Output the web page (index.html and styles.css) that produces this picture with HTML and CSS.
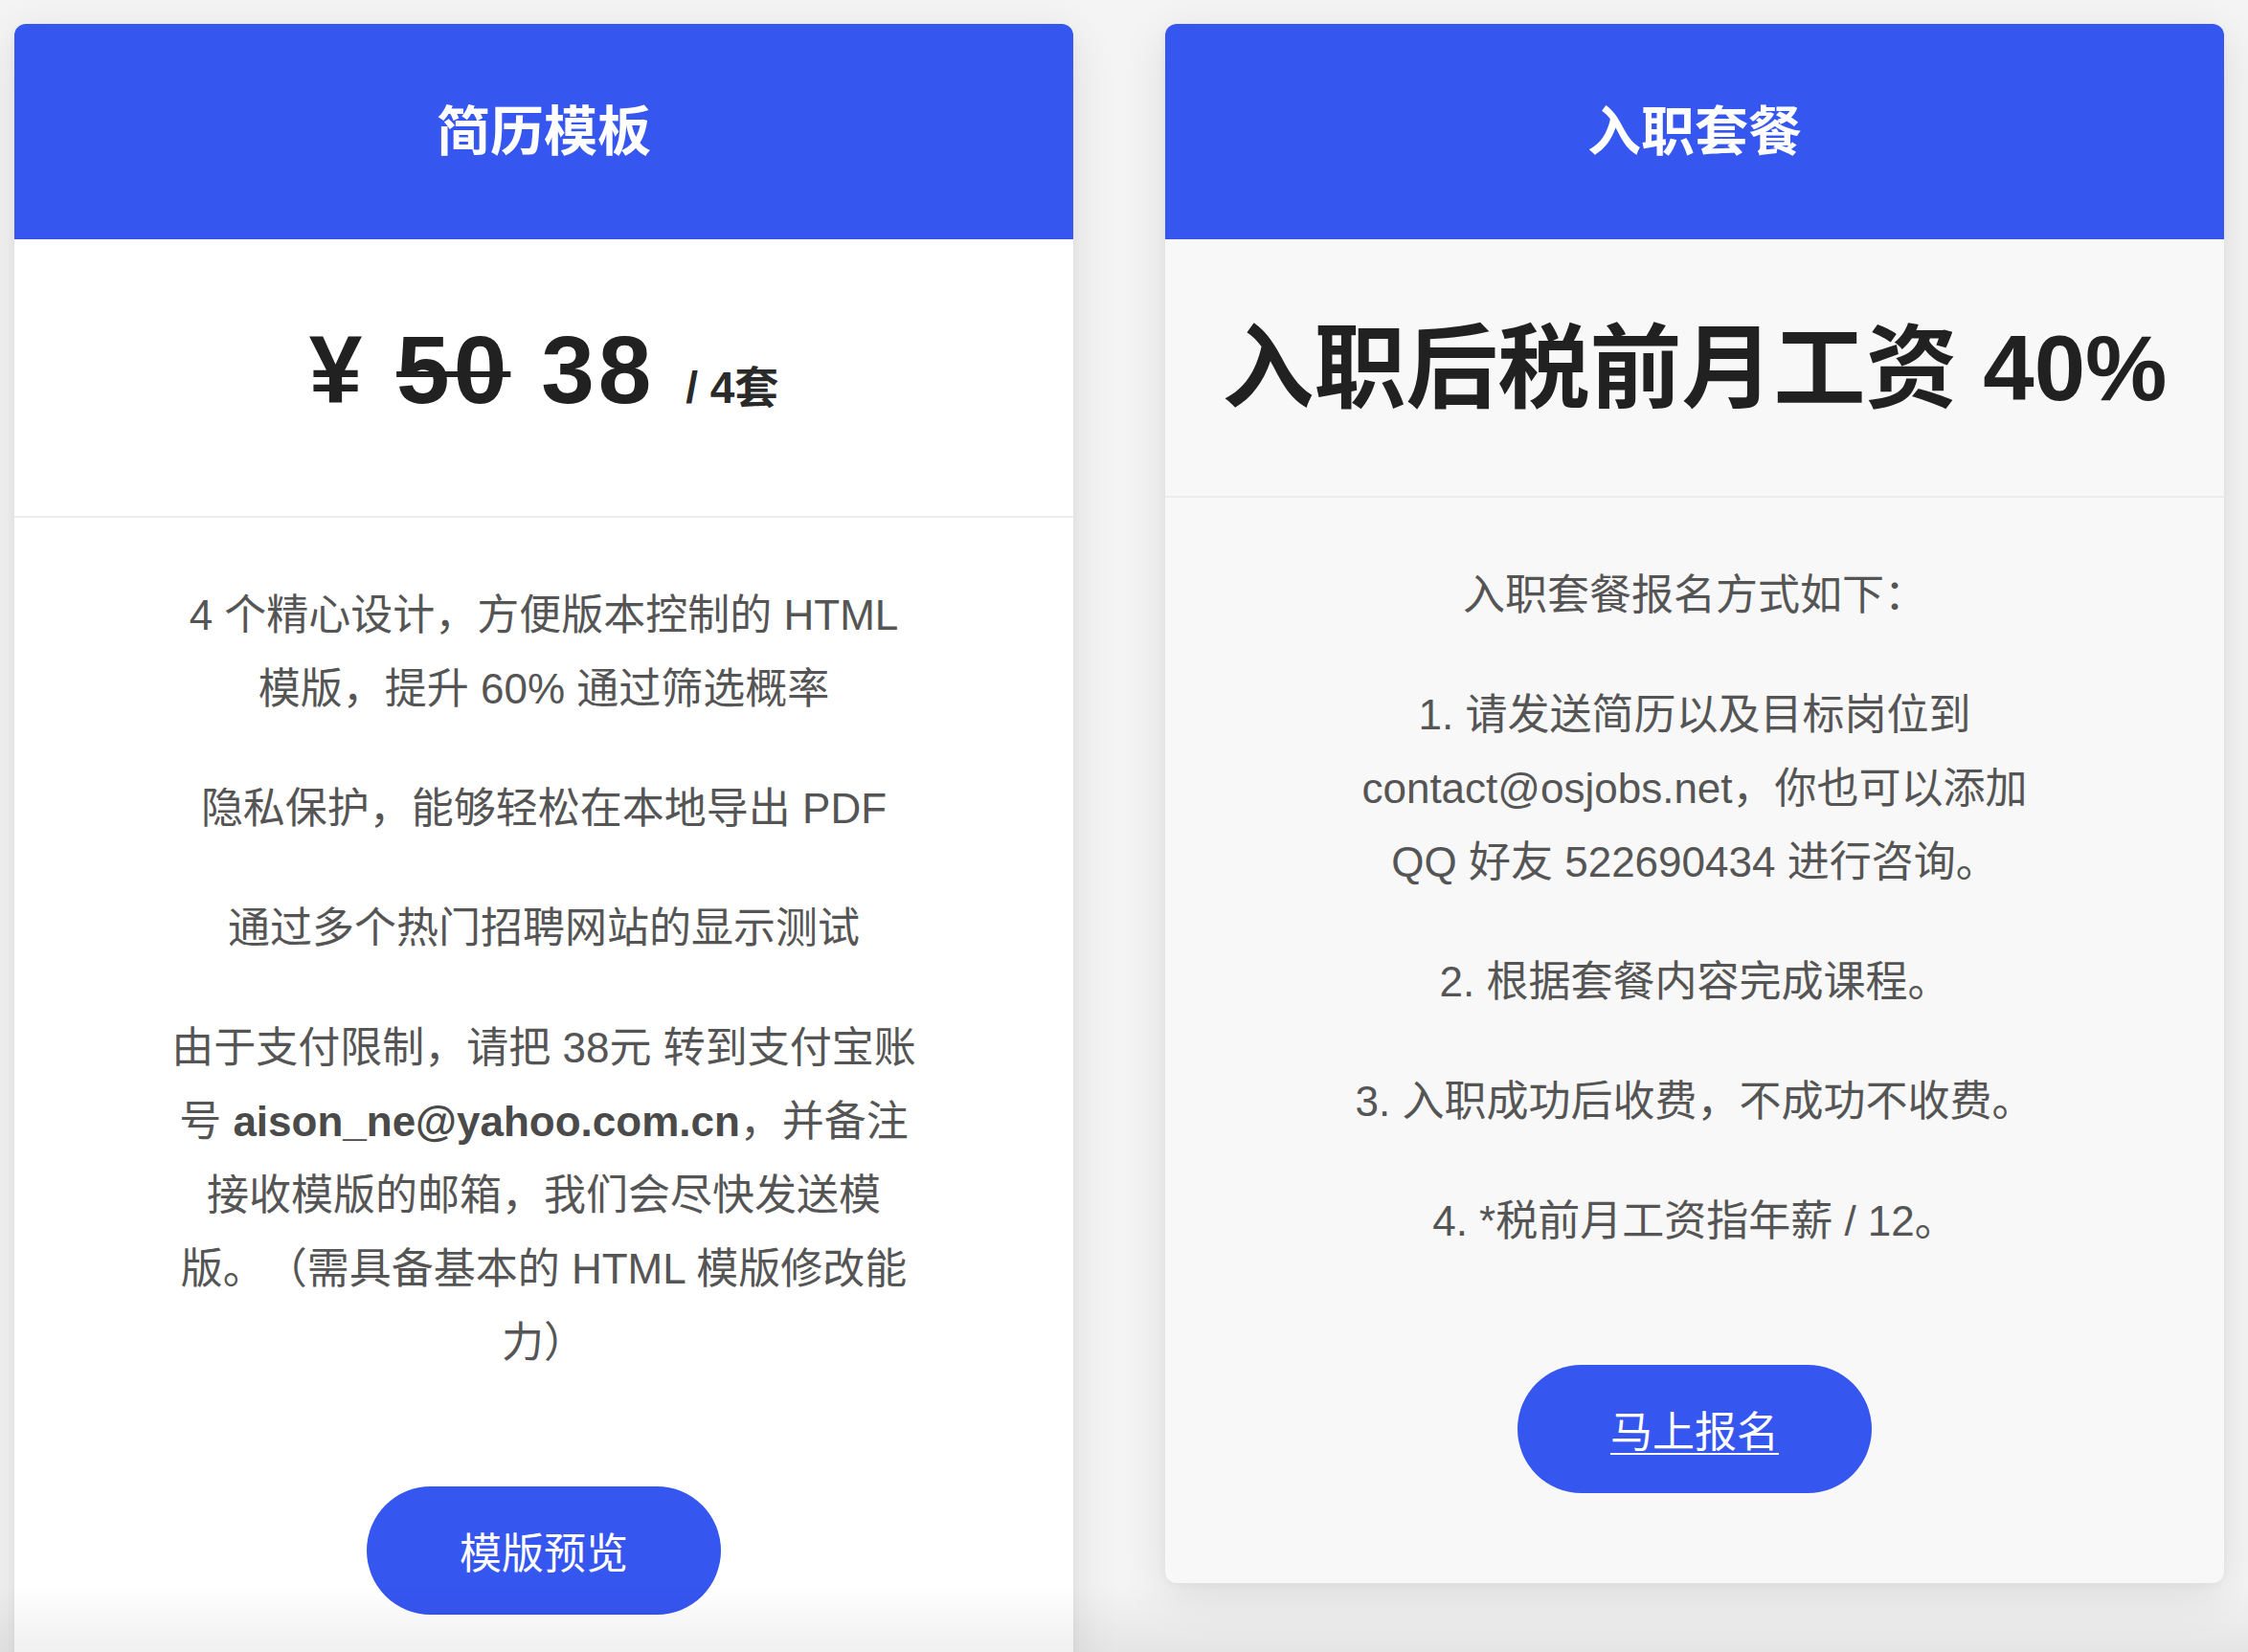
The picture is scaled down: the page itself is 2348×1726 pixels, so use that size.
FILE: index.html
```html
<!DOCTYPE html>
<html lang="zh-CN">
<head>
<meta charset="utf-8">
<title>简历模板 / 入职套餐</title>
<link rel="stylesheet" href="styles.css">
</head>
<body>
<main class="plans">
  <section class="card card--white">
    <header class="card-header"><h2 class="card-title">简历模板</h2></header>
    <div class="price price--tall">
      <h1 class="price-title price-title--spaced">¥ <s>50</s> 38 <small>/ 4套</small></h1>
    </div>
    <div class="card-body">
      <div class="copy copy--wide">
        <p>4 个精心设计，方便版本控制的 HTML 模版，提升 60% 通过筛选概率</p>
        <p>隐私保护，能够轻松在本地导出 PDF</p>
        <p>通过多个热门招聘网站的显示测试</p>
        <p>由于支付限制，请把 38元 转到支付宝账号 <b>aison_ne@yahoo.com.cn</b>，并备注接收模版的邮箱，我们会尽快发送模版。（需具备基本的 HTML 模版修改能力）</p>
      </div>
      <a class="btn">模版预览</a>
    </div>
  </section>
  <section class="card card--gray">
    <header class="card-header"><h2 class="card-title">入职套餐</h2></header>
    <div class="price">
      <h1 class="price-title">入职后税前月工资 40%</h1>
    </div>
    <div class="card-body">
      <div class="copy copy--narrow">
        <p>入职套餐报名方式如下：</p>
        <p>1. 请发送简历以及目标岗位到 contact@osjobs.net，你也可以添加 QQ 好友 522690434 进行咨询。</p>
        <p>2. 根据套餐内容完成课程。</p>
        <p>3. 入职成功后收费，不成功不收费。</p>
        <p>4. *税前月工资指年薪 / 12。</p>
      </div>
      <a class="btn btn--link" href="#">马上报名</a>
    </div>
  </section>
</main>
<div class="bottom-fade"></div>
</body>
</html>
```

FILE: styles.css
```css
* { box-sizing: border-box; }

html, body {
  margin: 0;
  padding: 0;
}

body {
  background: #f4f4f4;
  font-family: "Liberation Sans", "Noto Sans CJK SC", sans-serif;
  color: #555;
  overflow: hidden;
  text-spacing-trim: space-all;
}

.plans {
  display: grid;
  grid-template-columns: 1106px 1106px;
  column-gap: 96px;
  align-items: start;
  padding: 25px 0 0 15px;
}

.card {
  border-radius: 12px;
  overflow: hidden;
  box-shadow: 0 12px 48px rgba(0, 0, 0, 0.10), 0 2px 10px rgba(0, 0, 0, 0.04);
}

.card--white { background: #ffffff; }
.card--gray { background: #f8f8f8; }

.card-header {
  height: 225px;
  background: #3656f0;
  display: flex;
  align-items: center;
  justify-content: center;
}

.card-title {
  margin: 0;
  color: #ffffff;
  font-size: 56px;
  font-weight: 700;
  line-height: 1.2;
}

.price {
  padding: 77px 0 76px;
  border-bottom: 2px solid #ececec;
  text-align: center;
}

.price--tall {
  padding: 76px 0 93px;
}

.price-title {
  margin: 0;
  font-size: 96px;
  line-height: 1.2;
  font-weight: 700;
  color: #212121;
}

.price-title--spaced {
  font-size: 100px;
  letter-spacing: 4px;
}

.price-title s {
  text-decoration-thickness: 6px;
}

.price-title small {
  font-size: 46px;
  letter-spacing: 0;
  color: #2a2a2a;
}

.card-body {
  padding: 63px 0 94px;
  display: flex;
  flex-direction: column;
  align-items: center;
}

.copy {
  text-align: center;
  font-size: 44px;
  line-height: 77px;
}

.copy--wide { width: 788px; }
.copy--narrow { width: 752px; }

.copy p {
  margin: 0 0 48px;
}

.copy b {
  font-weight: 700;
  color: #4a4a4a;
}

.btn {
  margin-top: 64px;
  width: 370px;
  height: 134px;
  border-radius: 67px;
  background: #3656f0;
  color: #ffffff;
  font-size: 44px;
  display: flex;
  align-items: center;
  justify-content: center;
  text-decoration: none;
}

.btn--link {
  text-decoration: underline;
  text-decoration-thickness: 2px;
  text-underline-offset: 6px;
}

.bottom-fade {
  position: fixed;
  left: 0;
  right: 0;
  bottom: 0;
  height: 70px;
  background: linear-gradient(to bottom, rgba(0, 0, 0, 0), rgba(0, 0, 0, 0.06));
  pointer-events: none;
}
```
